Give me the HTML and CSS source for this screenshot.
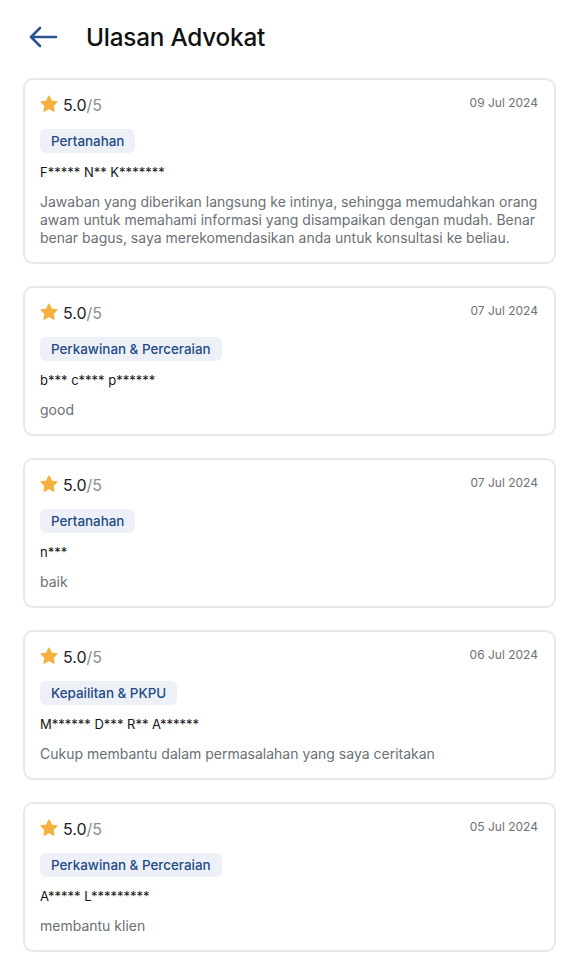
FILE: index.html
```html
<!DOCTYPE html>
<html lang="id">
<head>
<meta charset="utf-8">
<title>Ulasan Advokat</title>
<link rel="stylesheet" href="styles.css">
</head>
<body>
<header class="topbar">
  <svg class="back" viewBox="0 0 30 24" width="30" height="24" aria-hidden="true">
    <path d="M28 12H3M12 3L3 12L12 21" fill="none" stroke="#2c5391" stroke-width="2.6" stroke-linecap="round" stroke-linejoin="round"/>
  </svg>
  <h1 class="title">Ulasan Advokat</h1>
</header>
<main class="list">
  <article class="card">
    <div class="card-head">
      <div class="rating"><svg class="star" viewBox="0 0 24 24"><path d="M12 2.5l2.9 6 6.6.9-4.8 4.6 1.2 6.5L12 17.4l-5.9 3.1 1.2-6.5-4.8-4.6 6.6-.9z"/></svg><span class="score">5.0</span><span class="max">/5</span></div>
      <span class="date">09 Jul 2024</span>
    </div>
    <span class="tag">Pertanahan</span>
    <p class="name">F***** N** K*******</p>
    <p class="text">Jawaban yang diberikan langsung ke intinya, sehingga memudahkan orang awam untuk memahami informasi yang disampaikan dengan mudah. Benar benar bagus, saya merekomendasikan anda untuk konsultasi ke beliau.</p>
  </article>
  <article class="card">
    <div class="card-head">
      <div class="rating"><svg class="star" viewBox="0 0 24 24"><path d="M12 2.5l2.9 6 6.6.9-4.8 4.6 1.2 6.5L12 17.4l-5.9 3.1 1.2-6.5-4.8-4.6 6.6-.9z"/></svg><span class="score">5.0</span><span class="max">/5</span></div>
      <span class="date">07 Jul 2024</span>
    </div>
    <span class="tag">Perkawinan &amp; Perceraian</span>
    <p class="name">b*** c**** p******</p>
    <p class="text">good</p>
  </article>
  <article class="card">
    <div class="card-head">
      <div class="rating"><svg class="star" viewBox="0 0 24 24"><path d="M12 2.5l2.9 6 6.6.9-4.8 4.6 1.2 6.5L12 17.4l-5.9 3.1 1.2-6.5-4.8-4.6 6.6-.9z"/></svg><span class="score">5.0</span><span class="max">/5</span></div>
      <span class="date">07 Jul 2024</span>
    </div>
    <span class="tag">Pertanahan</span>
    <p class="name">n***</p>
    <p class="text">baik</p>
  </article>
  <article class="card">
    <div class="card-head">
      <div class="rating"><svg class="star" viewBox="0 0 24 24"><path d="M12 2.5l2.9 6 6.6.9-4.8 4.6 1.2 6.5L12 17.4l-5.9 3.1 1.2-6.5-4.8-4.6 6.6-.9z"/></svg><span class="score">5.0</span><span class="max">/5</span></div>
      <span class="date">06 Jul 2024</span>
    </div>
    <span class="tag">Kepailitan &amp; PKPU</span>
    <p class="name">M****** D*** R** A******</p>
    <p class="text">Cukup membantu dalam permasalahan yang saya ceritakan</p>
  </article>
  <article class="card">
    <div class="card-head">
      <div class="rating"><svg class="star" viewBox="0 0 24 24"><path d="M12 2.5l2.9 6 6.6.9-4.8 4.6 1.2 6.5L12 17.4l-5.9 3.1 1.2-6.5-4.8-4.6 6.6-.9z"/></svg><span class="score">5.0</span><span class="max">/5</span></div>
      <span class="date">05 Jul 2024</span>
    </div>
    <span class="tag">Perkawinan &amp; Perceraian</span>
    <p class="name">A***** L*********</p>
    <p class="text">membantu klien</p>
  </article>
</main>
</body>
</html>
```

FILE: styles.css
```css
* { box-sizing: border-box; }
html, body { margin: 0; padding: 0; background: #ffffff; }
body {
  font-family: "Inter", "Noto Sans", sans-serif;
  color: #111111;
  width: 579px;
  overflow: hidden;
}
.topbar {
  display: flex;
  align-items: center;
  height: 74px;
  padding: 0 0 0 28px;
}
.back { display: block; margin-right: 28px; }
.title {
  margin: 0;
  font-size: 24.3px;
  font-weight: 500;
  letter-spacing: -0.2px;
  color: #111111;
}
.list {
  display: flex;
  flex-direction: column;
  gap: 22px;
  padding: 4px 23px 0 23px;
}
.card {
  border: 2px solid #e6e8ec;
  border-radius: 10px;
  padding: 14px 16px 15px 15px;
  display: flex;
  flex-direction: column;
  align-items: flex-start;
}
.card-head {
  display: flex;
  align-items: flex-start;
  justify-content: space-between;
  width: 100%;
  height: 24px;
}
.rating { display: flex; align-items: center; height: 22px; }
.star {
  width: 20px; height: 20px;
  fill: #f4b03e; stroke: #f4b03e; stroke-width: 1.6; stroke-linejoin: round;
  margin-right: 4px; margin-top: -3px; margin-left: -1px;
}
.score { font-size: 16px; color: #222222; }
.max { font-size: 16px; color: #8a8d93; }
.date { font-size: 12px; color: #6e7178; margin-top: 1px; }
.tag {
  margin-top: 11px;
  height: 24px;
  line-height: 24px;
  padding: 0 11px;
  border-radius: 6px;
  background: #edf1f7;
  color: #234a86;
  font-size: 13.4px;
  font-weight: 500;
}
.name {
  margin: 10px 0 0 0;
  font-size: 13px;
  line-height: 18px;
  color: #151515;
}
.text {
  margin: 12px 0 0 0;
  font-size: 14px;
  line-height: 18px;
  color: #6b6f76;
}
```
